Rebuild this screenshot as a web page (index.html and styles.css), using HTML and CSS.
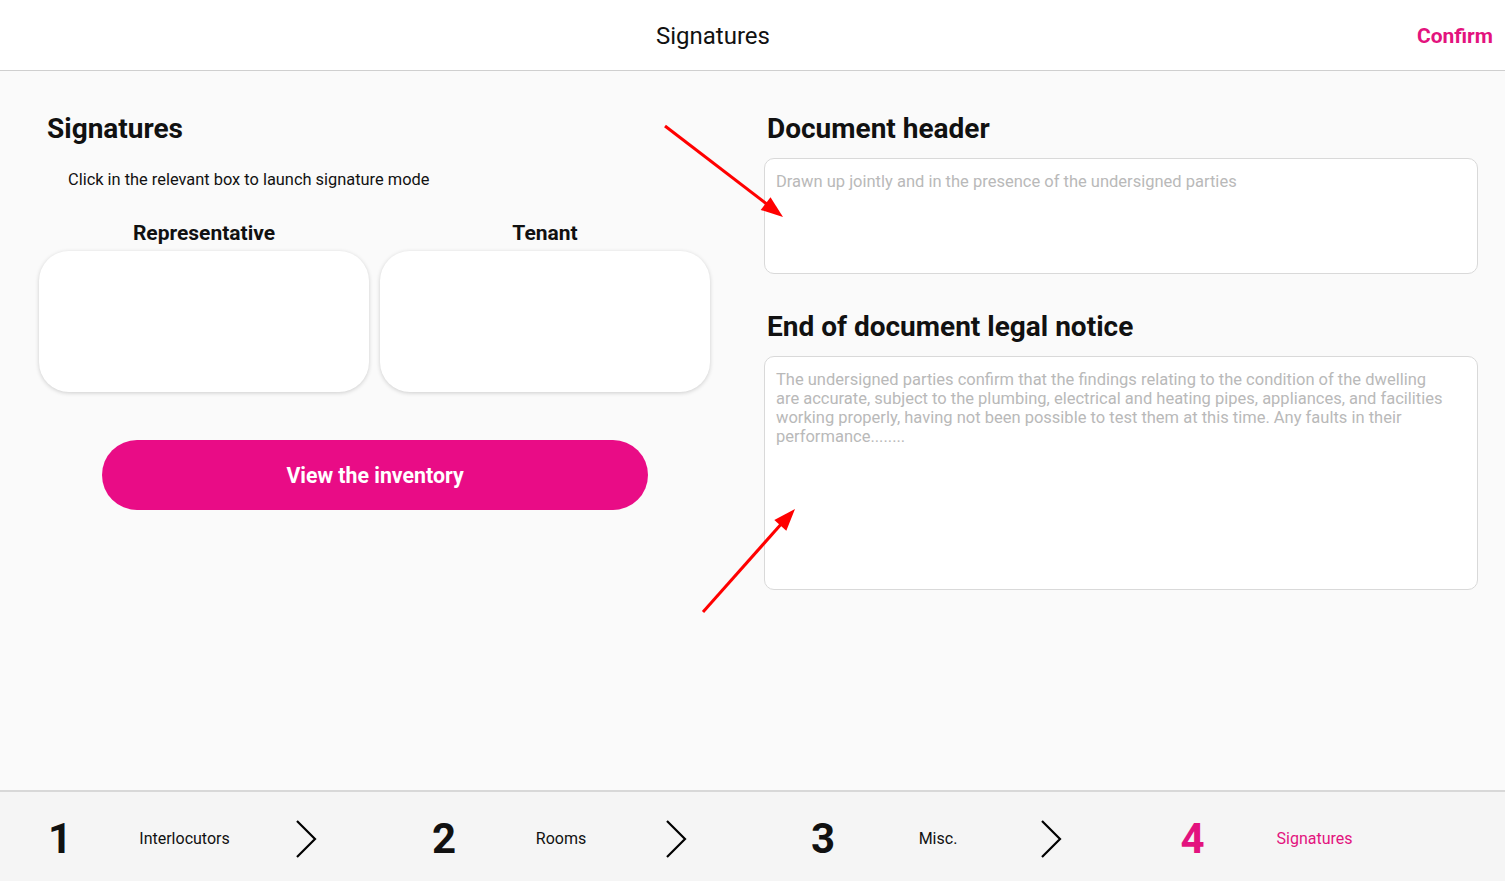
FILE: index.html
```html
<!DOCTYPE html>
<html lang="en">
<head>
<meta charset="utf-8">
<title>Signatures</title>
<link rel="stylesheet" href="styles.css">
</head>
<body>
<div class="app">
  <header class="topbar">
    <div class="topbar-side"></div>
    <h1 class="topbar-title">Signatures</h1>
    <div class="topbar-side topbar-action"><span class="confirm">Confirm</span></div>
  </header>

  <main class="content">
    <section class="col-left">
      <h2 class="section-title">Signatures</h2>
      <p class="hint">Click in the relevant box to launch signature mode</p>
      <div class="sig-grid">
        <div class="sig-item">
          <div class="sig-label">Representative</div>
          <div class="sig-box"></div>
        </div>
        <div class="sig-item">
          <div class="sig-label">Tenant</div>
          <div class="sig-box"></div>
        </div>
      </div>
      <div class="btn-row">
        <button class="btn-primary" type="button">View the inventory</button>
      </div>
    </section>

    <section class="col-right">
      <h2 class="section-title field-title">Document header</h2>
      <div class="field field-short">
        <div class="placeholder">Drawn up jointly and in the presence of the undersigned parties</div>
      </div>
      <h2 class="section-title field-title second">End of document legal notice</h2>
      <div class="field field-tall">
        <div class="placeholder">The undersigned parties confirm that the findings relating to the condition of the dwelling are accurate, subject to the plumbing, electrical and heating pipes, appliances, and facilities working properly, having not been possible to test them at this time. Any faults in their performance........</div>
      </div>
    </section>
  </main>

  <footer class="steps">
    <div class="step">
      <span class="step-num">1</span>
      <span class="step-label">Interlocutors</span>
      <svg class="chev" width="22" height="38" viewBox="0 0 22 38"><polyline points="2,1 20,19 2,37" fill="none" stroke="#000" stroke-width="2.2"/></svg>
    </div>
    <div class="step">
      <span class="step-num">2</span>
      <span class="step-label">Rooms</span>
      <svg class="chev" width="22" height="38" viewBox="0 0 22 38"><polyline points="2,1 20,19 2,37" fill="none" stroke="#000" stroke-width="2.2"/></svg>
    </div>
    <div class="step">
      <span class="step-num">3</span>
      <span class="step-label">Misc.</span>
      <svg class="chev" width="22" height="38" viewBox="0 0 22 38"><polyline points="2,1 20,19 2,37" fill="none" stroke="#000" stroke-width="2.2"/></svg>
    </div>
    <div class="step active">
      <span class="step-num">4</span>
      <span class="step-label">Signatures</span>
    </div>
  </footer>

  <svg class="arrows" width="1505" height="881" viewBox="0 0 1505 881">
    <line x1="665" y1="126" x2="768" y2="205" stroke="#f00" stroke-width="3"/>
    <polygon points="783,217 760.7,209.9 770.5,197.3" fill="#f00"/>
    <line x1="703" y1="612" x2="783" y2="522" stroke="#f00" stroke-width="3"/>
    <polygon points="795,509 786.3,530.7 774.3,520.1" fill="#f00"/>
  </svg>
</div>
</body>
</html>
```
FILE: styles.css
```css
* { box-sizing: border-box; }

html, body {
  margin: 0;
  padding: 0;
}

body {
  font-family: Roboto, "Noto Sans", "Liberation Sans", sans-serif;
  color: #111;
  background: #fafafa;
}

.app {
  position: relative;
  width: 1505px;
  height: 881px;
  display: flex;
  flex-direction: column;
  overflow: hidden;
}

/* Top bar */
.topbar {
  height: 71px;
  flex: 0 0 71px;
  background: #fff;
  border-bottom: 1px solid #cfcfcf;
  display: grid;
  grid-template-columns: 1fr auto 1fr;
  align-items: center;
  padding: 0 12px;
}

.topbar-title {
  margin: 2px 79px 0 0;
  font-size: 24px;
  font-weight: 400;
  color: #111;
}

.topbar-action {
  display: flex;
  justify-content: flex-end;
}

.confirm {
  color: #e3137e;
  font-size: 21px;
  font-weight: 700;
  margin-top: 2px;
}

/* Content */
.content {
  flex: 1;
  display: flex;
  gap: 54px;
  padding: 41px 27px 0 39px;
  background: #fafafa;
}

.col-left {
  width: 671px;
  flex: 0 0 671px;
}

.col-right {
  flex: 1;
}

.section-title {
  margin: 0;
  font-size: 28px;
  line-height: 33px;
  font-weight: 700;
  color: #111;
}

.col-left .section-title {
  padding-left: 8px;
}

.hint {
  margin: 25px 0 0 29px;
  font-size: 16.4px;
  line-height: 19px;
}

.sig-grid {
  margin-top: 32px;
  display: grid;
  grid-template-columns: 330px 330px;
  gap: 11px;
}

.sig-label {
  text-align: center;
  font-size: 21px;
  line-height: 24px;
  font-weight: 700;
}

.sig-box {
  margin-top: 6px;
  height: 141px;
  background: #fff;
  border-radius: 30px;
  box-shadow: 0 1px 4px rgba(0, 0, 0, 0.18);
}

.btn-row {
  display: flex;
  justify-content: center;
  margin-top: 48px;
}

.btn-primary {
  width: 546px;
  height: 70px;
  border: none;
  border-radius: 35px;
  background: #e90c86;
  color: #fff;
  font-family: Roboto, "Noto Sans", "Liberation Sans", sans-serif;
  font-size: 21.3px;
  font-weight: 700;
  cursor: pointer;
  margin-left: 1px;
}

.field-title {
  padding-left: 3px;
}

.field-title.second {
  margin-top: 36px;
}

.field {
  margin-top: 13px;
  background: #fff;
  border: 1px solid #d9d9d9;
  border-radius: 10px;
  padding: 13px 30px 0 11px;
}

.field-short { height: 116px; }
.field-tall { height: 234px; }

.placeholder {
  font-size: 16.5px;
  line-height: 19px;
  color: #b9b9b9;
}

/* Steps footer */
.steps {
  flex: 0 0 91px;
  height: 91px;
  background: #f5f5f5;
  border-top: 2px solid #d8d8d8;
  padding-top: 4px;
  display: grid;
  grid-template-columns: 120px 129px 113px 164px 70px 159px 136px 94px 131px 153px 91px;
  align-items: center;
  justify-items: center;
}

.step {
  display: contents;
}

.step-num {
  font-size: 42px;
  font-weight: 700;
  line-height: 1;
}

.step-label {
  font-size: 16px;
}

.chev { display: block; }

.step.active .step-num,
.step.active .step-label {
  color: #e3137e;
}

.arrows {
  position: absolute;
  left: 0;
  top: 0;
  pointer-events: none;
}
```
